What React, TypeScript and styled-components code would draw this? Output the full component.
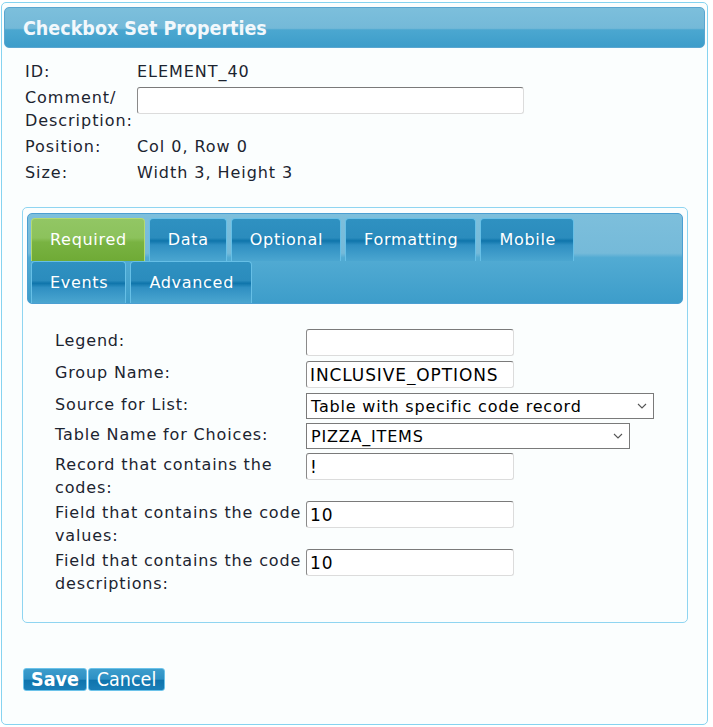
import React from "react";
import styled, { createGlobalStyle } from "styled-components";

const Global = createGlobalStyle`
  html, body { margin: 0; padding: 0; background: #ffffff; }
  body { font-family: "DejaVu Sans", Verdana, sans-serif; color: #1c2430; }
  * { box-sizing: border-box; }
`;

const Page = styled.div`
  width: 713px;
  height: 727px;
  padding: 2px 0 0 1px;
  overflow: hidden;
`;

const Dialog = styled.div`
  width: 707px;
  height: 723px;
  border: 1px solid #86d3f0;
  border-radius: 5px;
  background: #fbfefe;
  padding: 4px 2px;
  display: flex;
  flex-direction: column;
`;

const Header = styled.div`
  height: 41px;
  border-radius: 5px;
  border: 1px solid #5aa6d0;
  background: linear-gradient(180deg, #7cbfdc 0%, #74b9d8 52%, #4ba7d0 56%, #3d9dca 100%);
  display: flex;
  align-items: center;
  padding: 2px 0 0 18px;
`;

const Title = styled.h1`
  margin: 0;
  font-family: "DejaVu Sans Condensed", "DejaVu Sans", sans-serif;
  font-stretch: condensed;
  font-weight: bold;
  font-size: 19.5px;
  color: #f2f8fc;
`;

const Info = styled.div`
  margin-top: 12px;
  padding-left: 21px;
  display: grid;
  grid-template-columns: 112px auto;
  row-gap: 3px;
  font-size: 16px;
  letter-spacing: 0.95px;
  line-height: 23px;
  justify-content: start;
  align-items: start;
`;

const InfoLabel = styled.div`
  width: 112px;
`;

const InfoValue = styled.div``;

const TextField = styled.input<{ $w: number }>`
  width: ${(p) => p.$w}px;
  height: 27px;
  margin: 0 0 3px;
  padding: 0 3px;
  border: 1px solid #dcdcdc;
  border-top-color: #7a7a7a;
  border-left-color: #8a8a8a;
  border-radius: 3px;
  background: #ffffff;
  font-family: "DejaVu Sans", Verdana, sans-serif;
  font-size: 17px;
  letter-spacing: 0.9px;
  color: #000;
  outline: none;
`;

const CommentField = styled(TextField)`
  margin-top: 1px;
`;

const Frame = styled.div`
  margin: 23px 0 0 18px;
  width: 666px;
  height: 416px;
  border: 1px solid #8fd5f1;
  border-radius: 5px;
  padding: 5px 4px;
`;

const TabBar = styled.div`
  height: 91px;
  border: 1px solid #4b9fd2;
  border-radius: 5px;
  background: linear-gradient(180deg, #7dbfdc 0%, #75bad9 44%, #52abd3 49%, #3d9dca 100%);
  padding: 4px 3px 0;
  display: flex;
  flex-direction: column;
`;

const TabRow = styled.div`
  display: flex;
  gap: 4px;
  height: 43px;
`;

const Tab = styled.div<{ $active?: boolean }>`
  height: 100%;
  padding: 0 17px 0 18px;
  display: flex;
  align-items: center;
  justify-content: center;
  font-size: 16px;
  letter-spacing: 0.7px;
  color: #ffffff;
  border: 1px solid ${(p) => (p.$active ? "#b4d972" : "#66bfe6")};
  border-bottom: none;
  border-radius: 4px 4px 0 0;
  background: ${(p) =>
    p.$active
      ? "linear-gradient(180deg, #92c664 0%, #8cc25c 45%, #79b342 55%, #6faa36 100%)"
      : "linear-gradient(180deg, #2f91c1 0%, #2b8cbd 45%, #0f75ab 52%, #2f8fc2 62%, #4ba6d0 100%)"};
`;

const Form = styled.div`
  margin: 25px 0 0 28px;
  display: grid;
  grid-template-columns: 251px auto;
  row-gap: 2px;
  justify-content: start;
  align-items: start;
  font-size: 16px;
  letter-spacing: 0.85px;
  line-height: 23px;
`;

const FormLabel = styled.div`
  width: 251px;
`;

const Select = styled.div<{ $w: number }>`
  width: ${(p) => p.$w}px;
  height: 26px;
  margin-bottom: 2px;
  border: 1px solid #7a7a7a;
  background: #ffffff;
  display: flex;
  align-items: center;
  justify-content: space-between;
  padding: 0 6px 0 4px;
  font-size: 16px;
  letter-spacing: 0.8px;
  color: #000;
`;

const Chevron = () => (
  <svg width="10" height="6" viewBox="0 0 10 6">
    <path d="M1 1 L5 5 L9 1" fill="none" stroke="#555" strokeWidth="1.1" />
  </svg>
);

const Buttons = styled.div`
  margin: 45px 0 0 19px;
  display: flex;
  gap: 1px;
`;

const Button = styled.button<{ $primary?: boolean }>`
  height: 23px;
  padding: 0 ${(p) => (p.$primary ? 7 : 8)}px;
  border: 1px solid #6cc3ea;
  border-radius: 3px;
  background: linear-gradient(180deg, #3d9dcc 0%, #2d90c4 48%, #0f74ad 54%, #1a7fb8 100%);
  color: #ffffff;
  font-family: "DejaVu Sans Condensed", "DejaVu Sans", sans-serif;
  font-stretch: condensed;
  font-size: 19.5px;
  font-weight: ${(p) => (p.$primary ? "bold" : "normal")};
  line-height: 20px;
  cursor: pointer;
`;

const tabRows = [
  ["Required", "Data", "Optional", "Formatting", "Mobile"],
  ["Events", "Advanced"],
];

export default function App() {
  return (
    <Page>
      <Global />
      <Dialog>
        <Header>
          <Title>Checkbox Set Properties</Title>
        </Header>
        <Info>
          <InfoLabel>ID:</InfoLabel>
          <InfoValue>ELEMENT_40</InfoValue>
          <InfoLabel>
            Comment/
            <br />
            Description:
          </InfoLabel>
          <InfoValue>
            <CommentField $w={387} defaultValue="" />
          </InfoValue>
          <InfoLabel>Position:</InfoLabel>
          <InfoValue>Col 0, Row 0</InfoValue>
          <InfoLabel>Size:</InfoLabel>
          <InfoValue>Width 3, Height 3</InfoValue>
        </Info>
        <Frame>
          <TabBar>
            {tabRows.map((row, i) => (
              <TabRow key={i}>
                {row.map((t) => (
                  <Tab key={t} $active={t === "Required"}>
                    {t}
                  </Tab>
                ))}
              </TabRow>
            ))}
          </TabBar>
          <Form>
            <FormLabel>Legend:</FormLabel>
            <TextField $w={208} defaultValue="" />
            <FormLabel>Group Name:</FormLabel>
            <TextField $w={208} defaultValue="INCLUSIVE_OPTIONS" />
            <FormLabel>Source for List:</FormLabel>
            <Select $w={348}>
              <span>Table with specific code record</span>
              <Chevron />
            </Select>
            <FormLabel>Table Name for Choices:</FormLabel>
            <Select $w={324}>
              <span>PIZZA_ITEMS</span>
              <Chevron />
            </Select>
            <FormLabel>Record that contains the codes:</FormLabel>
            <TextField $w={208} defaultValue="!" />
            <FormLabel>Field that contains the code values:</FormLabel>
            <TextField $w={208} defaultValue="10" />
            <FormLabel>Field that contains the code descriptions:</FormLabel>
            <TextField $w={208} defaultValue="10" />
          </Form>
        </Frame>
        <Buttons>
          <Button $primary>Save</Button>
          <Button>Cancel</Button>
        </Buttons>
      </Dialog>
    </Page>
  );
}
